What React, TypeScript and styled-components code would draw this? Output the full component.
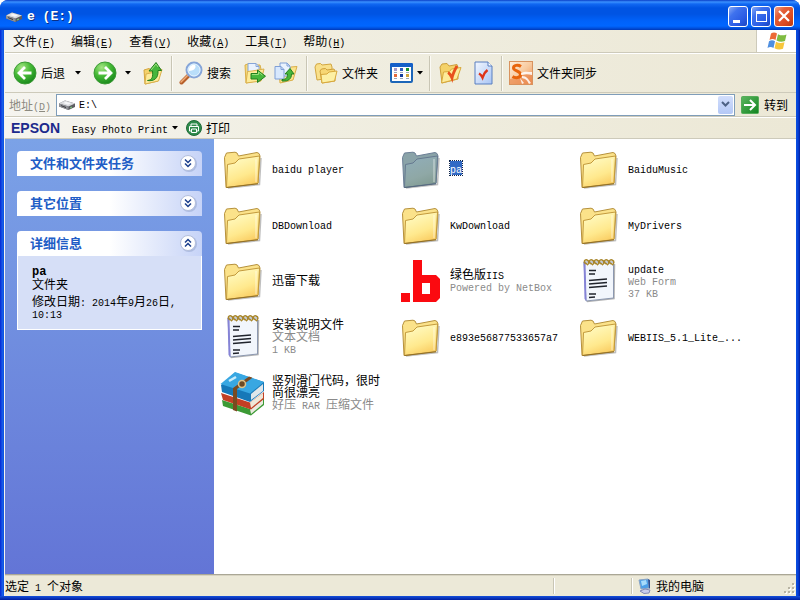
import React from "react";
import styled, { createGlobalStyle, css } from "styled-components";

const GlobalStyle = createGlobalStyle`
  * { box-sizing: border-box; }
  body { margin: 0; background: #fff; }
  button, input { font: inherit; color: inherit; margin: 0; padding: 0; border: 0; background: none; border-radius: 0; }
  button { cursor: default; text-align: left; }
`;

/* ---------- window frame ---------- */

const Window = styled.div`
  min-height: 100vh;
  display: flex;
  flex-direction: column;
  overflow: hidden;
  border-radius: 8px 8px 0 0;
  background: #0a48dc;
  font: 12px/12px "Noto Sans CJK SC", sans-serif;
  color: #000;
`;

const Latin = styled.span`
  font-family: "Liberation Mono", monospace;
  font-size: 10px;
  line-height: 0;
`;

const TitleBar = styled.header`
  height: 30px;
  flex: none;
  display: flex;
  align-items: center;
  gap: 3px;
  padding: 3px 6px 0;
  background: linear-gradient(#0a3fc8 0, #3a91ff 2px, #1168f2 4px, #0054e3 8px, #0054e3 14px, #0062fa 21px, #0066ff 26px, #0052e0 28px, #0038b8 30px);
`;

const Title = styled.h1`
  flex: 1;
  margin: 0 0 0 2px;
  font: bold 13px/18px "Liberation Mono", monospace;
  color: #fff;
  text-shadow: 1px 1px 0 #0a2f86;
`;

const CaptionButton = styled.button<{ $close?: boolean }>`
  width: 20px;
  height: 21px;
  display: grid;
  place-items: center;
  border: 1px solid #fff;
  border-radius: 3px;
  background: ${(p) =>
    p.$close
      ? "linear-gradient(135deg, #f0a088 0, #e4603a 30%, #dc4a20 70%, #b83a10 100%)"
      : "linear-gradient(135deg, #8aabf5 0, #3f72ee 30%, #2a5be4 70%, #1c45c0 100%)"};
`;

const Frame = styled.div`
  flex: 1;
  display: flex;
  flex-direction: column;
  padding: 0 4px 4px 5px;
  background:
    linear-gradient(to bottom, #1450dc, #001ea0) bottom / 100% 4px no-repeat,
    linear-gradient(to right, #0831d9 0, #0831d9 1px, #1a5fea 2px, #0a50e0 4px, #f4f3ee 4px) left / 5px 100% no-repeat,
    linear-gradient(to right, #0a50e0 0, #0842d8 2px, #001ea0 4px) right / 4px 100% no-repeat;
`;

/* ---------- bars ---------- */

const bar = css`
  flex: none;
  display: flex;
  align-items: center;
  background: linear-gradient(to right, #f5f4ef, #f0eee1 40%, #ece8d6);
  border-bottom: 1px solid #cdcaba;
`;

const MenuBar = styled.nav`
  ${bar}
  height: 23px;
`;

const MenuButton = styled.button`
  height: 22px;
  padding: 0 8px;
  white-space: nowrap;
`;

const LogoBox = styled.div`
  width: 40px;
  height: 22px;
  margin-left: auto;
  display: grid;
  place-items: center;
  background: #fff;
  border-left: 1px solid #cdcaba;
`;

const Toolbar = styled.div`
  ${bar}
  height: 40px;
  padding: 0 8px;
  border-top: 1px solid #fff;
`;

const ToolButton = styled.button<{ $gap?: number }>`
  height: 36px;
  display: flex;
  align-items: center;
  gap: 4px;
  margin-right: ${(p) => p.$gap ?? 0}px;
  white-space: nowrap;
`;

const Divider = styled.span<{ $left?: number; $right?: number }>`
  width: 2px;
  height: 35px;
  margin: 0 ${(p) => p.$right ?? 6}px 0 ${(p) => p.$left ?? 6}px;
  border-left: 1px solid #c9c6b5;
  border-right: 1px solid #fbfaf5;
`;

const AddressBar = styled.div`
  ${bar}
  height: 24px;
  padding: 0 8px 0 4px;
`;

const AddressLabel = styled.label`
  width: 47px;
  color: #8c8a80;
  white-space: nowrap;
`;

const AddressField = styled.div`
  flex: 1;
  height: 22px;
  display: flex;
  align-items: center;
  padding: 1px 1px 1px 2px;
  border: 1px solid #7f9db9;
  background: #fff;
`;

const AddressInput = styled.input`
  flex: 1;
  min-width: 0;
  height: 18px;
  padding-top: 2px;
  margin-left: 4px;
  outline: 0;
  font: 10px/16px "Liberation Mono", monospace;
`;

const DropButton = styled.button`
  width: 15px;
  height: 18px;
  display: grid;
  place-items: center;
  border-radius: 2px;
  background: linear-gradient(#d2defc, #b4c8f6);
`;

const GoButton = styled.button`
  display: flex;
  align-items: center;
  gap: 5px;
  margin-left: 6px;
  white-space: nowrap;
`;

const EpsonBar = styled.div`
  ${bar}
  height: 22px;
  padding-left: 6px;
  border-top: 1px solid #fff;
`;

const Brand = styled.span`
  width: 61px;
  font: bold 14px/16px "Liberation Sans", sans-serif;
  color: #1c2a8c;
`;

/* ---------- content ---------- */

const Content = styled.div`
  flex: 1;
  display: flex;
  background: #fff;
`;

const TaskPane = styled.aside`
  width: 209px;
  flex: none;
  display: flex;
  flex-direction: column;
  gap: 15px;
  padding: 12px;
  background: linear-gradient(#7ba2e7, #6375d6);
`;

const PanelHeader = styled.button`
  width: 100%;
  height: 25px;
  display: flex;
  align-items: center;
  justify-content: space-between;
  padding: 0 4px 2px 13px;
  border-radius: 4px 4px 0 0;
  background: linear-gradient(to right, #fff 0, #fff 50%, #c6d3f7 100%);
  font-size: 13px;
  font-weight: bold;
  color: #215dc6;
`;

const PanelBody = styled.div`
  padding: 10px 14px;
  border: 1px solid #fff;
  border-top: 0;
  background: #d6dff7;
`;

const DetailName = styled.div`
  font: bold 12px/12px "Liberation Mono", monospace;
`;

const DetailLine = styled.div<{ $spaced?: boolean }>`
  margin-top: ${(p) => (p.$spaced ? 5 : 0)}px;
`;

const Files = styled.main`
  flex: 1;
  display: grid;
  grid-template-columns: repeat(auto-fill, 178px);
  grid-auto-rows: 56px;
  align-content: start;
  padding: 1px 4px;
`;

const FileItem = styled.button`
  display: flex;
  align-items: center;
  gap: 6px;
`;

const FileText = styled.span`
  width: 118px;
  display: flex;
  flex-direction: column;
  align-items: flex-start;
`;

const FileName = styled.span<{ $selected?: boolean }>`
  ${(p) =>
    p.$selected &&
    css`
      padding: 1px 0;
      background: #316ac5;
      color: #fff;
      outline: 1px dotted #10264c;
    `}
`;

const FileMeta = styled.span`
  color: #8a8a8a;
`;

/* ---------- status ---------- */

const StatusBar = styled.footer`
  flex: none;
  height: 22px;
  display: flex;
  align-items: center;
  border-top: 1px solid #aaa796;
  box-shadow: inset 0 1px 0 #d8d4c2;
  background: #ece9d8;
`;

const StatusText = styled.span`
  flex: 1;
`;

const StatusCell = styled.span<{ $width: number }>`
  width: ${(p) => p.$width}px;
  height: 16px;
  display: flex;
  align-items: center;
  gap: 4px;
  padding-left: 6px;
  border-left: 1px solid #c9c6b5;
  box-shadow: inset 1px 0 0 #fff;
`;

const Grip = styled.svg`
  margin: auto 1px 0 auto;
`;

/* ---------- text ---------- */

function Text({ children }: { children: string }) {
  return (
    <span>
      {children
        .split(/([\u2E80-\uFFEF]+)/)
        .filter(Boolean)
        .map((run, i) => (/[\u2E80-\uFFEF]/.test(run) ? run : <Latin key={i}>{run}</Latin>))}
    </span>
  );
}

function Hotkey({ label, letter }: { label: string; letter: string }) {
  return (
    <span>
      {label}
      <Latin>
        (<u>{letter}</u>)
      </Latin>
    </span>
  );
}

/* ---------- icons ---------- */

const Caret = () => (
  <svg width="6" height="4" viewBox="0 0 6 4">
    <path d="M0 0h6L3 3.5z" fill="#000" />
  </svg>
);

const DriveIcon = () => (
  <svg width="16" height="16" viewBox="0 0 16 16">
    <path d="M0 6.500 6 3.500l10 3v3.500L9.500 13 0 9.500z" fill="#5c5c60" />
    <path d="M0 6.500 6 3.500l10 3L9.500 9.500z" fill="#d9dade" />
    <path d="M4 6 7 4.700l5 1.500-3 1.500z" fill="#f7f7f9" />
    <path d="M0 6.500 9.500 9.500V13L0 9.500z" fill="#8f9096" />
    <path d="M2 8.200l5 1.700v1L2 9z" fill="#303034" />
    <path d="M11 10.500l2-1v1l-2 1z" fill="#7ed37c" />
  </svg>
);

const RoundArrow = ({ forward }: { forward?: boolean }) => (
  <svg width="24" height="24" viewBox="0 0 24 24">
    <defs>
      <radialGradient id={forward ? "gf" : "gb"} cx="35%" cy="25%" r="80%">
        <stop offset="0" stopColor="#a4e583" />
        <stop offset="0.5" stopColor="#45b935" />
        <stop offset="1" stopColor="#17861b" />
      </radialGradient>
    </defs>
    <circle cx="12" cy="12" r="11" fill={`url(#${forward ? "gf" : "gb"})`} stroke="#3c9a35" />
    <path
      d={forward ? "M5.500 12h12M12 6l6 6-6 6" : "M18.500 12h-12M12 6l-6 6 6 6"}
      fill="none"
      stroke="#fff"
      strokeWidth="2.800"
    />
  </svg>
);

const UpIcon = () => (
  <svg width="20" height="24" viewBox="0 0 20 24">
    <path d="M1 9l5-1.500 2 1.500h3l7-1-3 12-13 3z" fill="#f4d26a" stroke="#d4a53c" />
    <path d="M2 23 3 13l7-1.500 2-2 7-1L15.500 20z" fill="#fdeb9a" stroke="#dbb04c" />
    <path d="M4.500 19.500c5-.5 5.500-4 5-9.500H6L13 1.500l5.500 8H15c.5 8-4 11-10.500 10z" fill="#46b63c" stroke="#23801f" />
    <path d="M8 9.200 13 3l2 3" fill="none" stroke="#9be07c" />
  </svg>
);

const SearchIcon = () => (
  <svg width="24" height="24" viewBox="0 0 24 24">
    <path d="M9.500 14.500 2.500 21.500" stroke="#b6602c" strokeWidth="4" strokeLinecap="round" />
    <path d="M9 14 2 21" stroke="#f0ad78" strokeWidth="1.500" strokeLinecap="round" />
    <circle cx="15" cy="9" r="7.500" fill="#b9defa" stroke="#86a5d8" strokeWidth="2" />
    <circle cx="15" cy="9" r="6" fill="none" stroke="#e4f3fe" />
    <path d="M10 10a5 5 0 0 1 6-6c2 3-2 6-6 6z" fill="#fff" />
  </svg>
);

const MoveIcon = () => (
  <svg width="22" height="22" viewBox="0 0 22 22">
    <path d="M1 3l4-1.500 2 1.500h9l1 4v11L2 21z" fill="#f6da7c" stroke="#d9ae48" />
    <path d="M4 1.500h8l3 3V15H4z" fill="#e9f2fe" stroke="#86a5d8" />
    <path d="M12 1.500v3h3" fill="none" stroke="#86a5d8" />
    <path d="M2 21 3.500 9.500 8 9l12-2-3 12z" fill="#fdeb9a" stroke="#dbb04c" />
    <path d="M7 11.500h6.500V8l8 6.200-8 6.300V17H7z" fill="#46b63c" stroke="#23801f" />
    <path d="M8 12.500h6.500V10l4 3.200" fill="none" stroke="#9be07c" />
  </svg>
);

const CopyIcon = () => (
  <svg width="24" height="22" viewBox="0 0 24 22">
    <path d="M5 8l10-1 2-2 6-.5L19 18l-13 3z" fill="#fbe48c" stroke="#d9ae48" />
    <path d="M6 1h7l3 3v10H6z" fill="#e9f2fe" stroke="#7f9fd6" />
    <path d="M13 1v3h3" fill="none" stroke="#7f9fd6" />
    <path d="M1 4.500h6l3 3V17H1z" fill="#d8e8fd" stroke="#7f9fd6" />
    <path d="M7 4.500v3h3" fill="none" stroke="#7f9fd6" />
    <path d="M8 17.500c4 0 5.500-1.500 5.500-5.500H11l5-5.500 4 5.500h-2.500c0 5-3 7.500-9.500 7z" fill="#46b63c" stroke="#23801f" />
  </svg>
);

const FoldersIcon = () => (
  <svg width="24" height="22" viewBox="0 0 24 22">
    <path d="M1 5l1.500-3 4-.5L8 3l9-1 1 3v11L3 18z" fill="#f9e08a" stroke="#d2a640" />
    <path d="M6 9l1.500-2 4-.5L13 8l7-1 1 2v10L8 21z" fill="#f7d774" stroke="#cf9f3a" />
    <path d="M8 21 7 12.500l6-.5 2-2 8-1-2.500 10z" fill="#fdf0a4" stroke="#d8a93c" />
  </svg>
);

const ViewsIcon = () => (
  <svg width="23" height="20" viewBox="0 0 23 20">
    <rect x="1" y="1" width="21" height="18" rx="1" fill="#fff" stroke="#1c66b8" strokeWidth="2" />
    <path d="M0 1l1-1h21l1 1v3H0z" fill="#1560c8" />
    {["#a79ac8", "#2d5cc0", "#18922a", "#e3693c", "#123c9c", "#cfa53a"].map((c, i) => (
      <g key={i}>
        <rect x={4 + (i % 3) * 6} y={i < 3 ? 5 : 11} width="3" height="3" fill={c} />
        <path d={`M${4 + (i % 3) * 6} ${i < 3 ? 9.5 : 15.5}h3`} stroke="#9aa8b8" />
      </g>
    ))}
  </svg>
);

const FolderCheckIcon = () => (
  <svg width="23" height="24" viewBox="0 0 23 24">
    <path d="M1 6l2-3 5-.5L10 5l8-1.500 1 3V18L3 22z" fill="#f4d26a" stroke="#cc9f3c" />
    <path d="M2.500 22 4.500 11l6-.5 2-2.500L22 6.500 18 18z" fill="#fdeb9a" stroke="#d8a93c" />
    <path d="M9 11.500c2 1 3 3 4 5.500 1-5 3-8.500 5-12" fill="none" stroke="#e8501c" strokeWidth="2.800" />
  </svg>
);

const DocCheckIcon = () => (
  <svg width="19" height="24" viewBox="0 0 19 24">
    <defs>
      <linearGradient id="doc" x1="0" y1="0" x2="1" y2="1">
        <stop offset="0" stopColor="#f2f7ff" />
        <stop offset="1" stopColor="#a9c5f4" />
      </linearGradient>
    </defs>
    <path d="M1 1h13l4 4v18H1z" fill="url(#doc)" stroke="#587fc0" />
    <path d="M14 1v4h4" fill="#fff" stroke="#587fc0" />
    <path d="M5 12.500c2 1 2.500 2 3.500 4 1-3 3-6 5-7.500" fill="none" stroke="#de3418" strokeWidth="2.500" />
  </svg>
);

const SyncIcon = () => (
  <svg width="24" height="24" viewBox="0 0 24 24">
    <defs>
      <linearGradient id="sync" x1="0" y1="0" x2="1" y2="1">
        <stop offset="0" stopColor="#fdeedd" />
        <stop offset="0.5" stopColor="#f8cba0" />
        <stop offset="1" stopColor="#ec8a4e" />
      </linearGradient>
    </defs>
    <rect x="0.500" y="0.500" width="23" height="23" fill="url(#sync)" stroke="#d8925e" />
    <path d="M1 18c5-1 9-4 22-6v11H1z" fill="#e98a50" opacity="0.700" />
    <path d="M12 5.500C9 3.500 4.500 4 4.500 7s7 3 7 6.500-5 4-8 2" fill="none" stroke="#e8640c" strokeWidth="3" />
    <path d="M12 12c4-2 7-1 11-1v3c-4-1-7-1-11 0zM13 15c5 0 6 3 9 7l-2 1c-2-4-3-5-7-6zM11 17l4 5-2 1z" fill="#fff" opacity="0.850" />
  </svg>
);

const GoIcon = () => (
  <svg width="18" height="18" viewBox="0 0 18 18">
    <defs>
      <linearGradient id="go" x1="0" y1="0" x2="1" y2="1">
        <stop offset="0" stopColor="#5cb660" />
        <stop offset="1" stopColor="#128420" />
      </linearGradient>
    </defs>
    <rect x="0.500" y="0.500" width="17" height="17" rx="1" fill="url(#go)" stroke="#54ac58" />
    <path d="M3 9h10.500M9 4l5 5-5 5" fill="none" stroke="#fff" strokeWidth="2" />
  </svg>
);

const PrintIcon = () => (
  <svg width="16" height="16" viewBox="0 0 16 16">
    <circle cx="8" cy="8" r="7.500" fill="#2f8b4c" stroke="#1f6a37" />
    <path d="M5 6V4h6v2M5 11H3.500V6.500h9V11H11M5.500 9h5v3.500h-5z" fill="none" stroke="#fff" />
  </svg>
);

const WindowsFlag = () => (
  <svg width="20" height="19" viewBox="0 0 20 19">
    <path d="M4 1.500c2-1.300 4-1.300 6 0L8.500 8c-2-1.300-4-1.300-6 0z" fill="#ec6a36" />
    <path d="M11 2.200c3 1.500 5 1.500 8.500.3L18 9c-3 1.200-5.500 1-8.500-.5z" fill="#7fbc42" />
    <path d="M2 9.300c2-1.300 4-1.300 6 0L6.500 16c-2-1.300-4-1.300-6 0z" fill="#4f8fe0" />
    <path d="M9 9.800c3 1.500 5 1.500 8.500.4L16 16.800c-3 1.200-5.500 1-8.500-.5z" fill="#f7c63c" />
  </svg>
);

const Chevrons = ({ up }: { up?: boolean }) => (
  <svg width="20" height="20" viewBox="0 0 20 20">
    <circle cx="11" cy="11" r="8" fill="#8e9fcb" opacity="0.5" />
    <circle cx="10" cy="10" r="7.500" fill="#fff" stroke="#b4bfdb" />
    <path
      d={up ? "M7 9.500l3-3 3 3M7 13.500l3-3 3 3" : "M7 6.500l3 3 3-3M7 10.500l3 3 3-3"}
      fill="none"
      stroke="#1c3f8c"
      strokeWidth="1.500"
    />
  </svg>
);

const BigFolder = ({ selected }: { selected?: boolean }) => {
  const id = selected ? "fs" : "fn";
  return (
    <svg width="48" height="48" viewBox="0 0 48 48">
      <defs>
        <linearGradient id={id} x1="0.300" y1="0" x2="0.700" y2="1">
          <stop offset="0" stopColor={selected ? "#90adb8" : "#fffbc4"} />
          <stop offset="0.600" stopColor={selected ? "#8fa8a6" : "#ffe98e"} />
          <stop offset="1" stopColor={selected ? "#809a90" : "#f9c95c"} />
        </linearGradient>
      </defs>
      <path d="M10 44 41.500 40.500 43 14" fill="none" stroke="#000" strokeOpacity="0.250" strokeWidth="1.500" />
      <path
        d="M8 43.500 6.500 13.500 8.500 9l8.500-.8 2 .8 1.500 3L39 8.500l2 1 1 2.500-2 27z"
        fill={selected ? "#8aa3a8" : "#fbe28a"}
        stroke={selected ? "#6c7f96" : "#b6913c"}
      />
      <path
        d="M8.500 43.500 9.500 20.500 17 19l4-4 20.500-3L40 39.500z"
        fill={`url(#${id})`}
        stroke={selected ? "#667a90" : "#c39a3c"}
      />
      <path d="M38 15v23" stroke="#fff" strokeOpacity="0.600" />
      <path d="M8.500 43.500 40 39.800" stroke={selected ? "#55687c" : "#8f6e28"} />
    </svg>
  );
};

const Notepad = () => (
  <svg width="48" height="48" viewBox="0 0 48 48">
    <path d="M13 45.500 40 42.500 40.500 8" fill="none" stroke="#000" strokeOpacity="0.300" strokeWidth="1.500" />
    <path d="M10 6h29.500v36L12 45z" fill="#f2f6fc" stroke="#8c98b0" />
    <path d="M9.500 6l1 37 2 2L11.500 6z" fill="#8583d6" />
    {[0, 1, 2, 3, 4, 5].map((i) => (
      <path key={i} d={`M${13 + i * 5} 8c-4-1-3-5 0-4s2 4 0 5`} fill="none" stroke="#a8862c" strokeWidth="1.500" />
    ))}
    <path d="M15 14.500h7M15 18h6M15 24.500l18-1.500M15 28l18-1.500M15 31.500l18-1.500M15 38h7M15 41.500l6-.5" stroke="#20242c" strokeWidth="1.300" />
  </svg>
);

const NetBoxIcon = () => (
  <svg width="48" height="48" viewBox="0 0 48 48">
    <path
      fillRule="evenodd"
      fill="#fb0a10"
      d="M5 37h9v9H5zM17 4h9v15h14l4 4v19l-4 4H17zM26 27v11h8V27z"
    />
  </svg>
);

const RarIcon = () => (
  <svg width="48" height="48" viewBox="0 0 48 48">
    <path d="M4 32 32 41 46 30v7L33 47.500 5 38z" fill="#3c9a35" />
    <path d="M32 41l13-10v5L33 46z" fill="#e9eadf" />
    <path d="M3 25l29 9.500L46 24v7L33 41.500 5 32z" fill="#c33f24" />
    <path d="M32 34.500 45 25v5L33 40z" fill="#eee7d8" />
    <path d="M17 4.500 46 14v9L32 34 4 24 3 17z" fill="#1678b8" />
    <path d="M33 26l12-10v7L33 32z" fill="#dfe6ea" />
    <path d="M17 4 46 14 32 25.500 2.500 16z" fill="#38a7e2" />
    <path d="M31 8.500l3.500 1.200L19 21v22.500l-4-1.500V20z" fill="#7a4a20" />
    <path d="M11 13l7-4" stroke="#c9ecfb" strokeWidth="2.500" />
    <circle cx="24" cy="16" r="3.500" fill="#6d4a24" stroke="#dfc48a" strokeWidth="1.500" />
  </svg>
);

const ComputerIcon = () => (
  <svg width="14" height="16" viewBox="0 0 14 16">
    <path d="M1 2l9-1 1 9-8 1z" fill="#4c9fe8" stroke="#8aa4c4" />
    <path d="M3 3l5-1 1 4-5 2z" fill="#a7dcfb" />
    <path d="M10 1l2 1v8l-1 1z" fill="#2c4f94" />
    <path d="M2 13l5-2 5 1-1 3-5 .5z" fill="#c9cdec" stroke="#8289b6" />
  </svg>
);

/* ---------- data ---------- */

const menus = [
  ["文件", "F"],
  ["编辑", "E"],
  ["查看", "V"],
  ["收藏", "A"],
  ["工具", "T"],
  ["帮助", "H"],
];

type Kind = "folder" | "note" | "netbox" | "rar";
type Entry = { name: string; kind: Kind; meta?: string[]; selected?: boolean };

const entries: Entry[] = [
  { name: "baidu player", kind: "folder" },
  { name: "pa", kind: "folder", selected: true },
  { name: "BaiduMusic", kind: "folder" },
  { name: "DBDownload", kind: "folder" },
  { name: "KwDownload", kind: "folder" },
  { name: "MyDrivers", kind: "folder" },
  { name: "迅雷下载", kind: "folder" },
  { name: "绿色版IIS", kind: "netbox", meta: ["Powered by NetBox"] },
  { name: "update", kind: "note", meta: ["Web Form", "37 KB"] },
  { name: "安装说明文件", kind: "note", meta: ["文本文档", "1 KB"] },
  { name: "e893e56877533657a7", kind: "folder" },
  { name: "WEBIIS_5.1_Lite_...", kind: "folder" },
  { name: "竖列滑门代码，很时尚很漂亮", kind: "rar", meta: ["好压 RAR 压缩文件"] },
];

function FileIcon({ entry }: { entry: Entry }) {
  if (entry.kind === "note") return <Notepad />;
  if (entry.kind === "netbox") return <NetBoxIcon />;
  if (entry.kind === "rar") return <RarIcon />;
  return <BigFolder selected={entry.selected} />;
}

function Panel({ title, children }: { title: string; children?: React.ReactNode }) {
  return (
    <section>
      <PanelHeader aria-expanded={!!children}>
        <span>{title}</span>
        <Chevrons up={!!children} />
      </PanelHeader>
      {children && <PanelBody>{children}</PanelBody>}
    </section>
  );
}

export default function App() {
  return (
    <Window>
      <GlobalStyle />
      <TitleBar>
        <DriveIcon />
        <Title>e (E:)</Title>
        <CaptionButton aria-label="最小化">
          <svg width="18" height="19" viewBox="0 0 18 19">
            <path d="M4 13h7v3H4z" fill="#fff" />
          </svg>
        </CaptionButton>
        <CaptionButton aria-label="最大化">
          <svg width="18" height="19" viewBox="0 0 18 19">
            <path d="M4 4h11v11H4zM5 7v7h9V7z" fill="#fff" fillRule="evenodd" />
          </svg>
        </CaptionButton>
        <CaptionButton aria-label="关闭" $close>
          <svg width="18" height="19" viewBox="0 0 18 19">
            <path d="M4 4l10 10M14 4L4 14" stroke="#fff" strokeWidth="2.200" />
          </svg>
        </CaptionButton>
      </TitleBar>

      <Frame>
        <MenuBar>
          {menus.map(([label, letter]) => (
            <MenuButton key={letter}>
              <Hotkey label={label} letter={letter} />
            </MenuButton>
          ))}
          <LogoBox>
            <WindowsFlag />
          </LogoBox>
        </MenuBar>

        <Toolbar>
          <ToolButton $gap={10}>
            <RoundArrow />
            后退
          </ToolButton>
          <ToolButton aria-label="后退列表" $gap={12}>
            <Caret />
          </ToolButton>
          <ToolButton aria-label="前进" $gap={8}>
            <RoundArrow forward />
          </ToolButton>
          <ToolButton aria-label="前进列表" $gap={12}>
            <Caret />
          </ToolButton>
          <ToolButton aria-label="向上">
            <UpIcon />
          </ToolButton>
          <Divider $left={8} />
          <ToolButton $gap={13}>
            <SearchIcon />
            搜索
          </ToolButton>
          <ToolButton aria-label="移至" $gap={8}>
            <MoveIcon />
          </ToolButton>
          <ToolButton aria-label="复制到">
            <CopyIcon />
          </ToolButton>
          <Divider $left={8} />
          <ToolButton $gap={12}>
            <FoldersIcon />
            文件夹
          </ToolButton>
          <ToolButton aria-label="查看方式">
            <ViewsIcon />
            <Caret />
          </ToolButton>
          <Divider $right={8} />
          <ToolButton aria-label="同步文件夹" $gap={12}>
            <FolderCheckIcon />
          </ToolButton>
          <ToolButton aria-label="同步文件">
            <DocCheckIcon />
          </ToolButton>
          <Divider $left={8} />
          <ToolButton>
            <SyncIcon />
            文件夹同步
          </ToolButton>
        </Toolbar>

        <AddressBar>
          <AddressLabel htmlFor="address">
            <Hotkey label="地址" letter="D" />
          </AddressLabel>
          <AddressField>
            <DriveIcon />
            <AddressInput id="address" defaultValue="E:\" />
            <DropButton aria-label="地址列表">
              <svg width="9" height="7" viewBox="0 0 9 7">
                <path d="M1 1l3.500 3.500L8 1" fill="none" stroke="#4d6185" strokeWidth="2" />
              </svg>
            </DropButton>
          </AddressField>
          <GoButton>
            <GoIcon />
            转到
          </GoButton>
        </AddressBar>

        <EpsonBar>
          <Brand>EPSON</Brand>
          <ToolButton $gap={8}>
            <Text>Easy Photo Print</Text>
            <Caret />
          </ToolButton>
          <ToolButton>
            <PrintIcon />
            打印
          </ToolButton>
        </EpsonBar>

        <Content>
          <TaskPane>
            <Panel title="文件和文件夹任务" />
            <Panel title="其它位置" />
            <Panel title="详细信息">
              <DetailName>pa</DetailName>
              <DetailLine>文件夹</DetailLine>
              <DetailLine $spaced>
                <Text>修改日期: 2014年9月26日, 10:13</Text>
              </DetailLine>
            </Panel>
          </TaskPane>
          <Files>
            {entries.map((entry) => (
              <FileItem key={entry.name}>
                <FileIcon entry={entry} />
                <FileText>
                  <FileName $selected={entry.selected}>
                    <Text>{entry.name}</Text>
                  </FileName>
                  {entry.meta?.map((line) => (
                    <FileMeta key={line}>
                      <Text>{line}</Text>
                    </FileMeta>
                  ))}
                </FileText>
              </FileItem>
            ))}
          </Files>
        </Content>

        <StatusBar>
          <StatusText>
            <Text>选定 1 个对象</Text>
          </StatusText>
          <StatusCell $width={78} />
          <StatusCell $width={165}>
            <ComputerIcon />
            我的电脑
            <Grip width="12" height="12" viewBox="0 0 12 12">
              {[[9, 1], [5, 5], [9, 5], [1, 9], [5, 9], [9, 9]].map(([x, y]) => (
                <g key={`${x}-${y}`}>
                  <path d={`M${x + 1} ${y + 1}h2v2h-2z`} fill="#fff" />
                  <path d={`M${x} ${y}h2v2h-2z`} fill="#b8b4a3" />
                </g>
              ))}
            </Grip>
          </StatusCell>
        </StatusBar>
      </Frame>
    </Window>
  );
}
